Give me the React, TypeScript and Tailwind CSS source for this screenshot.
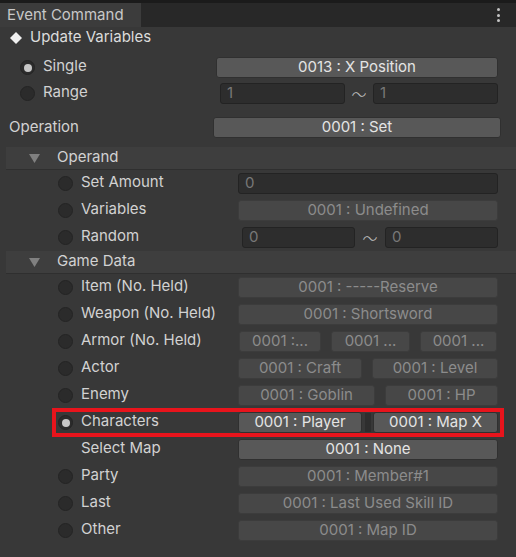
import React from "react";

const FONT = "font-['Inter','Noto_Sans',sans-serif]";

function Radio({ checked = false }: { checked?: boolean }) {
  return (
    <span className="w-[15px] h-[15px] shrink-0 rounded-full bg-[#2b2b2b] border border-[#242424] flex items-center justify-center">
      {checked && <span className="w-[8px] h-[8px] rounded-full bg-[#c6c6c6]" />}
    </span>
  );
}

function Btn({ children, enabled = false, className = "" }: { children: React.ReactNode; enabled?: boolean; className?: string }) {
  return (
    <div
      className={
        "h-[21px] rounded-[3px] flex items-center justify-center whitespace-nowrap overflow-hidden border " +
        (enabled
          ? "bg-[#585858] text-[#e4e4e4] border-[#303030] "
          : "bg-[#474747] text-[#8c8c8c] border-[#3c3c3c] ") +
        className
      }
    >
      {children}
    </div>
  );
}

function Input({ children, className = "" }: { children: React.ReactNode; className?: string }) {
  return (
    <div className={"h-[21px] rounded-[3px] bg-[#2d2d2d] border border-[#232323] text-[#787878] flex items-center pl-[6px] " + className}>
      {children}
    </div>
  );
}

function Tilde() {
  return <span className="text-[#c2c2c2] text-[15px] font-['Noto_Sans_CJK_JP',sans-serif] font-light leading-none">〜</span>;
}

function Header({ title }: { title: string }) {
  return (
    <div className="ml-[6px] h-[23px] bg-[#3e3e3e] border-b border-[#2f2f2f] flex items-center">
      <svg width="11" height="9" viewBox="0 0 11 9" className="ml-[23px]">
        <polygon points="0,0 11,0 5.5,9" fill="#808080" />
      </svg>
      <span className="ml-[17px] text-[#d2d2d2] pb-[1px]">{title}</span>
    </div>
  );
}

function Row({
  label,
  radio = true,
  checked = false,
  children,
}: {
  label: string;
  radio?: boolean;
  checked?: boolean;
  children: React.ReactNode;
}) {
  return (
    <div className="h-[27px] flex items-start pt-[3px]">
      <div className="w-[238px] shrink-0 h-[21px] flex items-center pl-[58px]">
        {radio ? <Radio checked={checked} /> : <span className="w-[15px] shrink-0" />}
        <span className="ml-[8px] text-[#d2d2d2] whitespace-nowrap pb-[3px]">{label}</span>
      </div>
      <div className="w-[260px] shrink-0 flex items-center">{children}</div>
    </div>
  );
}

export default function App() {
  return (
    <div className={"w-[516px] h-[557px] bg-[#383838] text-[15px] text-[#d2d2d2] relative overflow-hidden " + FONT}>
      {/* Tab bar */}
      <div className="h-[3px] bg-[#1b1b1b]" />
      <div className="h-[24px] bg-[#282828] flex">
        <div className="w-[141px] bg-[#3c3c3c] flex items-center pl-[7px] text-[#c8c8c8] whitespace-nowrap">Event Command</div>
        <div className="flex-1" />
        <div className="w-[20px] mr-[8px] flex flex-col items-center justify-center gap-[2.5px]">
          <span className="w-[3px] h-[3px] rounded-full bg-[#c4c4c4]" />
          <span className="w-[3px] h-[3px] rounded-full bg-[#c4c4c4]" />
          <span className="w-[3px] h-[3px] rounded-full bg-[#c4c4c4]" />
        </div>
      </div>

      {/* Title */}
      <div className="h-[22px] flex items-center pl-[10px]">
        <svg width="12" height="12" viewBox="0 0 12 12">
          <polygon points="6,0 12,6 6,12 0,6" fill="#f0f0f0" />
        </svg>
        <span className="ml-[8px] text-[#dcdcdc] pb-[1px]">Update Variables</span>
      </div>

      {/* Single */}
      <div className="mt-[7px] h-[23px] flex items-center">
        <div className="w-[216px] shrink-0 flex items-center pl-[20px]">
          <Radio checked />
          <span className="ml-[8px] pb-[3px]">Single</span>
        </div>
        <Btn enabled className="w-[282px]">0013 : X Position</Btn>
      </div>

      {/* Range */}
      <div className="mt-[3px] h-[23px] flex items-center">
        <div className="w-[220px] shrink-0 flex items-center pl-[20px]">
          <Radio />
          <span className="ml-[8px] pb-[3px]">Range</span>
        </div>
        <Input className="w-[125px]">1</Input>
        <div className="w-[28px] flex justify-center">
          <Tilde />
        </div>
        <Input className="w-[125px]">1</Input>
      </div>

      {/* Operation */}
      <div className="mt-[11px] h-[23px] flex items-center">
        <div className="w-[213px] shrink-0 pl-[9px]">Operation</div>
        <Btn enabled className="w-[288px]">0001 : Set</Btn>
      </div>

      {/* Operand */}
      <div className="mt-[8px]">
        <Header title="Operand" />
        <Row label="Set Amount">
          <Input className="w-[260px]">0</Input>
        </Row>
        <Row label="Variables">
          <Btn className="w-[260px]">0001 : Undefined</Btn>
        </Row>
        <Row label="Random">
          <Input className="ml-[4px] w-[113px]">0</Input>
          <div className="w-[30px] flex justify-center">
            <Tilde />
          </div>
          <Input className="w-[113px]">0</Input>
        </Row>
      </div>

      {/* Game Data */}
      <Header title="Game Data" />
      <Row label="Item (No. Held)">
        <Btn className="w-[260px]">0001 : -----Reserve</Btn>
      </Row>
      <Row label="Weapon (No. Held)">
        <Btn className="w-[260px]">0001 : Shortsword</Btn>
      </Row>
      <Row label="Armor (No. Held)">
        <Btn className="ml-[1px] w-[82px]">0001 :...</Btn>
        <Btn className="ml-[10px] w-[79px]">0001 ...</Btn>
        <Btn className="ml-[10px] w-[77px]">0001 ...</Btn>
      </Row>
      <Row label="Actor">
        <Btn className="w-[124px]">0001 : Craft</Btn>
        <Btn className="ml-[10px] w-[126px]">0001 : Level</Btn>
      </Row>
      <Row label="Enemy">
        <Btn className="w-[137px]">0001 : Goblin</Btn>
        <Btn className="ml-[10px] w-[113px]">0001 : HP</Btn>
      </Row>
      <div className="relative">
        <Row label="Characters" checked>
          <Btn enabled className="w-[124px]">0001 : Player</Btn>
          <div className="w-[11px] h-[21px] flex items-center justify-center">
            <div className="w-[6px] h-[19px] bg-[#2e2e2e]" />
          </div>
          <Btn enabled className="w-[125px]">0001 : Map X</Btn>
        </Row>
        <div className="absolute left-[52px] right-[12px] top-[-1px] bottom-[-1px] border-[4px] border-[#e8141c] pointer-events-none" />
      </div>
      <Row label="Select Map" radio={false}>
        <Btn enabled className="w-[260px]">0001 : None</Btn>
      </Row>
      <Row label="Party">
        <Btn className="w-[260px]">0001 : Member#1</Btn>
      </Row>
      <Row label="Last">
        <Btn className="w-[260px]">0001 : Last Used Skill ID</Btn>
      </Row>
      <Row label="Other">
        <Btn className="w-[260px]">0001 : Map ID</Btn>
      </Row>
    </div>
  );
}
